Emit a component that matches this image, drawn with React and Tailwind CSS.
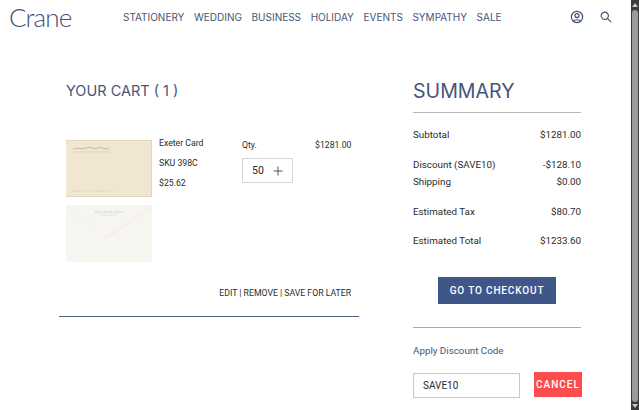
const navy = "text-[#46557a]";

function Card() {
  return (
    <svg width="86" height="57" viewBox="0 0 86 57" className="block">
      <rect width="86" height="57" fill="#f0e6d1" />
      <rect x="0" y="0" width="86" height="1" fill="#e4d9be" />
      <rect x="85" y="0" width="1" height="57" fill="#e0d5ba" />
      <rect x="0" y="56" width="86" height="1" fill="#e2d6ba" />
      <path d="M7 9 C12 7 16 10 20 8 S28 10 32 8 S38 10 43 8.5" stroke="#aca388" strokeWidth="0.9" fill="none" opacity="0.7" />
      <path d="M7 12 L45 12" stroke="#dbd0b5" strokeWidth="0.6" />
      <path d="M6 51 L47 51" stroke="#c9bfa1" strokeWidth="0.7" strokeDasharray="2 1" opacity="0.7" />
    </svg>
  );
}

function Envelope() {
  return (
    <svg width="86" height="57" viewBox="0 0 86 57" className="block">
      <rect width="86" height="57" fill="#f7f5f0" />
      <path d="M86 1 L50 27 L38 34" stroke="#eeeae2" strokeWidth="1" fill="none" />
      <path d="M0 1 L30 24" stroke="#f3f0e9" strokeWidth="1" fill="none" />
      <path d="M29 7 L59 7" stroke="#c8c7be" strokeWidth="0.9" strokeDasharray="2 1" />
      <path d="M35 10 L52 10" stroke="#dddcd4" strokeWidth="0.7" />
    </svg>
  );
}

function Row({ label, value, className = "" }) {
  return (
    <div className={`flex justify-between text-[#2b2b2b] ${className}`}>
      <span>{label}</span>
      <span>{value}</span>
    </div>
  );
}

export default function App() {
  return (
    <div className="flex h-[410px] w-[639px] overflow-hidden bg-white font-['Roboto',sans-serif]">
      <div className="min-w-0 flex-1">
        <header className={`flex h-[34px] items-center font-['Inter',sans-serif] ${navy}`}>
          <span className="ml-[9px] w-[114px] font-['Lato',sans-serif] text-[26px] font-light leading-none tracking-[-0.9px] text-[#414f77]">
            Crane
          </span>
          <nav className="flex gap-[9.6px] text-[10px] leading-none">
            {["STATIONERY", "WEDDING", "BUSINESS", "HOLIDAY", "EVENTS", "SYMPATHY", "SALE"].map((n) => (
              <span key={n}>{n}</span>
            ))}
          </nav>
          <svg className="ml-[68px]" width="14" height="14" viewBox="0 0 14 14" fill="none" stroke="#3f4d72" strokeWidth="1.2">
            <circle cx="7" cy="7" r="5.6" />
            <circle cx="7" cy="5.6" r="2" />
            <path d="M3.4 11 C4.4 9.3 9.6 9.3 10.6 11" />
          </svg>
          <svg className="ml-[16px]" width="12" height="12" viewBox="0 0 12 12" fill="none" stroke="#46557a" strokeWidth="1.2">
            <circle cx="4.8" cy="4.8" r="3.6" />
            <path d="M7.5 7.5 L11.2 11.2" />
          </svg>
        </header>

        <div className="flex">
          <section className="ml-[59px] w-[300px]">
            <h2 className={`mt-[48px] ml-[7px] font-['Inter',sans-serif] text-[14.5px] font-normal leading-[18px] ${navy}`}>
              YOUR CART ( 1 )
            </h2>
            <div className="ml-[7px] mt-[40px] flex text-[8.7px] text-[#2b2b2b]">
              <div className="flex flex-col gap-[8px]">
                <Card />
                <Envelope />
              </div>
              <div className="ml-[7px] flex w-[83px] flex-col gap-[9px] leading-[11px]">
                <span className="-mt-[2px]">Exeter Card</span>
                <span>SKU 398C</span>
                <span>$25.62</span>
              </div>
              <div className="w-[73px]">
                <div className="leading-[11px]">Qty.</div>
                <div className="mt-[7px] flex h-[25px] w-[51px] items-center border border-[#d5d5d5] pl-[9px] text-[10.5px]">
                  <span>50</span>
                  <svg className="ml-[9px]" width="10" height="10" viewBox="0 0 10 10" stroke="#555" strokeWidth="1">
                    <path d="M0.5 5 H9.5 M5 0.5 V9.5" />
                  </svg>
                </div>
              </div>
              <div className="leading-[11px]">$1281.00</div>
            </div>
            <div className="mr-[8px] mt-[26px] text-right text-[8.7px] leading-[11px] text-[#2b2b2b]">
              EDIT | REMOVE | SAVE FOR LATER
            </div>
            <div className="mt-[17px] h-px bg-[#54657f]" />
          </section>

          <aside className="ml-[54px] w-[168px]">
            <h2 className={`mt-[45px] font-['Inter',sans-serif] text-[19.6px] font-normal leading-[24px] ${navy}`}>
              SUMMARY
            </h2>
            <div className="mt-[9px] h-px bg-[#b3b6bd]" />
            <div className="mt-[16px] text-[9.8px] leading-[12px]">
              <Row label="Subtotal" value="$1281.00" />
              <Row label="Discount (SAVE10)" value="-$128.10" className="mt-[18px]" />
              <Row label="Shipping" value="$0.00" className="mt-[5px]" />
              <Row label="Estimated Tax" value="$80.70" className="mt-[18px]" />
              <Row label="Estimated Total" value="$1233.60" className="mt-[17px]" />
            </div>
            <button className="ml-[25px] mt-[30px] block h-[27px] w-[118px] bg-[#3f5788] text-[10px] font-medium tracking-[0.85px] text-white">
              GO TO CHECKOUT
            </button>
            <div className="mt-[23px] h-px bg-[#a9abb0]" />
            <div className={`mt-[17px] text-[9.8px] leading-[12px] ${navy}`}>Apply Discount Code</div>
            <div className="mt-[16px] flex items-start justify-between">
              <input
                readOnly
                value="SAVE10"
                className="h-[25px] w-[107px] border border-[#c8c8c8] pl-[9px] text-[10px] text-[#2b2b2b] outline-none"
              />
              <button className="-mr-[1px] -mt-[1px] h-[25px] w-[48px] bg-[#fb4c4e] text-[10px] font-medium tracking-[1px] text-white">
                CANCEL
              </button>
            </div>
          </aside>
        </div>
      </div>

      <div className="flex w-[8px] shrink-0 flex-col items-center bg-[#3b3b3b]">
        <svg className="mt-[3px]" width="6" height="4" viewBox="0 0 6 4"><path d="M3 0 L6 4 H0 Z" fill="#c8c8c8" /></svg>
        <div className="mt-[3px] h-[392px] w-[6px] rounded-[3px] bg-[#9b9b9b]" />
        <svg className="mt-[2px]" width="6" height="4" viewBox="0 0 6 4"><path d="M0 0 H6 L3 4 Z" fill="#c8c8c8" /></svg>
      </div>
    </div>
  );
}
